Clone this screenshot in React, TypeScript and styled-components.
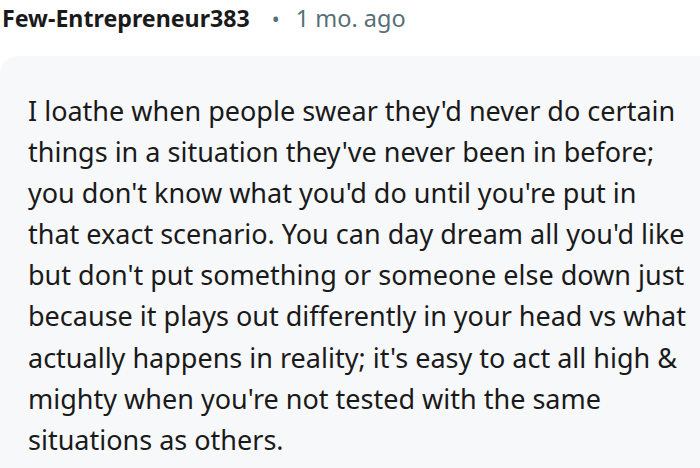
import React from "react";
import styled, { createGlobalStyle } from "styled-components";

const Global = createGlobalStyle`
  html, body { margin: 0; padding: 0; background: #ffffff; }
  body { width: 700px; height: 468px; overflow: hidden; }
`;

const Page = styled.div`
  width: 700px;
  height: 468px;
  display: flex;
  flex-direction: column;
  font-family: "Noto Sans", "Open Sans", sans-serif;
  background: #ffffff;
`;

const Header = styled.div`
  display: flex;
  align-items: baseline;
  height: 32px;
  line-height: 32px;
  padding: 2px 0 0 2px;
  white-space: nowrap;
`;

const Author = styled.span`
  font-weight: 700;
  font-size: 23.2px;
  color: #1a1a1b;
`;

const Dot = styled.span`
  color: #576f76;
  font-size: 21px;
  margin: 0 16px 0 22px;
`;

const Time = styled.span`
  color: #576f76;
  font-size: 23.5px;
`;

const Card = styled.div`
  flex: 1;
  margin-top: 22px;
  background: #f7f8f9;
  border-top-left-radius: 18px;
  padding: 34px 0 0 28px;
`;

const Body = styled.p`
  margin: 0;
  font-size: 27px;
  line-height: 41.1px;
  color: #1a1a1b;
  white-space: nowrap;
`;

const lines = [
  "I loathe when people swear they'd never do certain",
  "things in a situation they've never been in before;",
  "you don't know what you'd do until you're put in",
  "that exact scenario. You can day dream all you'd like",
  "but don't put something or someone else down just",
  "because it plays out differently in your head vs what",
  "actually happens in reality; it's easy to act all high &",
  "mighty when you're not tested with the same",
  "situations as others.",
];

export default function App() {
  return (
    <Page>
      <Global />
      <Header>
        <Author>Few-Entrepreneur383</Author>
        <Dot>•</Dot>
        <Time>1 mo. ago</Time>
      </Header>
      <Card>
        <Body>
          {lines.map((l, i) => (
            <React.Fragment key={i}>
              {l}
              {i < lines.length - 1 && <br />}
            </React.Fragment>
          ))}
        </Body>
      </Card>
    </Page>
  );
}
